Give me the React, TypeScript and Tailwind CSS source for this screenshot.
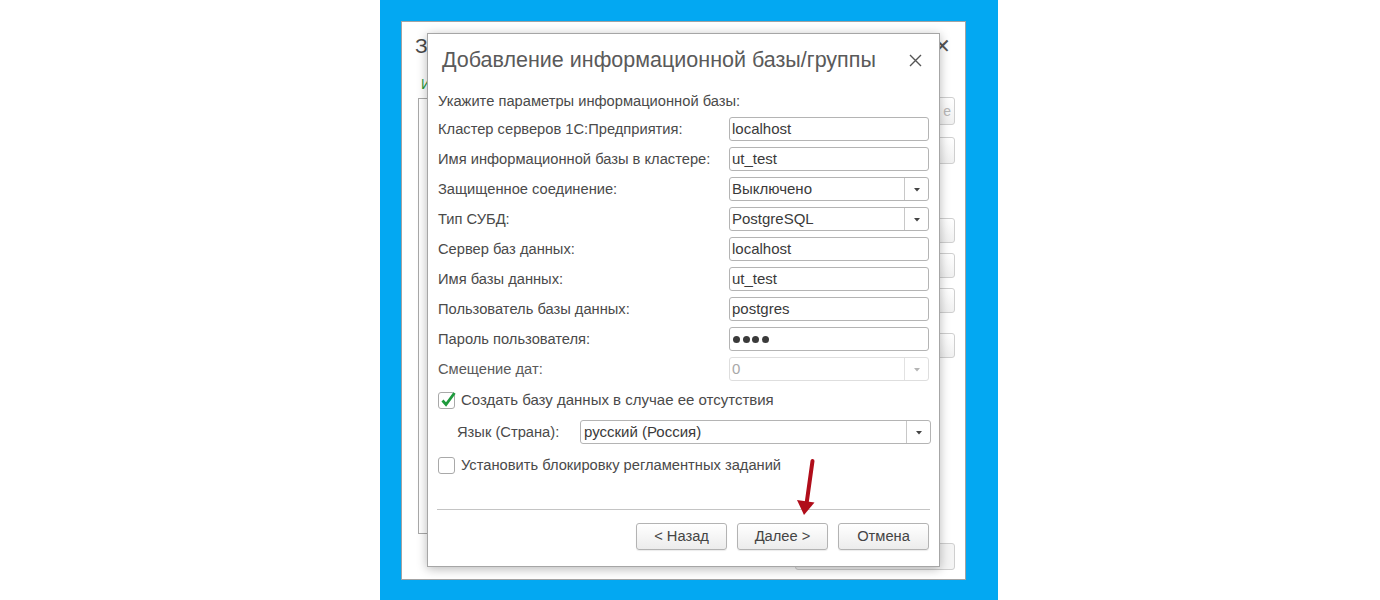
import React from 'react'

interface Field {
  label: string
  value: string
  kind?: 'text' | 'select' | 'password' | 'disabled'
}

const fields: Field[] = [
  { label: 'Кластер серверов 1С:Предприятия:', value: 'localhost' },
  { label: 'Имя информационной базы в кластере:', value: 'ut_test' },
  { label: 'Защищенное соединение:', value: 'Выключено', kind: 'select' },
  { label: 'Тип СУБД:', value: 'PostgreSQL', kind: 'select' },
  { label: 'Сервер баз данных:', value: 'localhost' },
  { label: 'Имя базы данных:', value: 'ut_test' },
  { label: 'Пользователь базы данных:', value: 'postgres' },
  { label: 'Пароль пользователя:', value: '••••', kind: 'password' },
  { label: 'Смещение дат:', value: '0', kind: 'disabled' },
]

const Arrow = ({ light }: { light?: boolean }) => (
  <svg width="8" height="5" viewBox="0 0 8 5">
    <path d="M1 1h6L4 4.5z" fill={light ? '#b5b5b5' : '#444'} />
  </svg>
)

const Input: React.FC<{ field: Field }> = ({ field }) => {
  const disabled = field.kind === 'disabled'
  const select = field.kind === 'select' || disabled
  return (
    <div
      className={`w-[200px] h-[24px] flex rounded-[3px] border bg-white ${
        disabled ? 'border-[#dedede]' : 'border-[#b4b4b4]'
      }`}
    >
      <div
        className={`flex-1 flex items-center pl-[2px] text-[15px] ${
          disabled ? 'text-[#a8a8a8]' : 'text-[#3a3a3a]'
        }`}
      >
        {field.kind === 'password' ? (
          <span className="flex gap-[2.5px] pl-[1px]" aria-label={field.value}>
            {[0, 1, 2, 3].map((i) => (
              <span key={i} className="w-[7px] h-[7px] rounded-full bg-[#3a3a3a]" />
            ))}
          </span>
        ) : (
          field.value
        )}
      </div>
      {select && (
        <div
          className={`w-[24px] flex items-center justify-center border-l ${
            disabled ? 'border-[#e2e2e2]' : 'border-[#c8c8c8]'
          }`}
        >
          <Arrow light={disabled} />
        </div>
      )}
    </div>
  )
}

const Checkbox = ({ checked }: { checked?: boolean }) => (
  <div className="w-[17px] h-[17px] rounded-[3px] border border-[#a9a9a9] bg-white relative">
    {checked && (
      <svg className="absolute left-[1px] top-[-3px]" width="17" height="18" viewBox="0 0 17 18">
        <path d="M2.5 10.5 L6 14.5 L14.5 3" stroke="#1e9a3c" strokeWidth="2.8" fill="none" />
      </svg>
    )}
  </div>
)

const Button = ({ children }: { children: React.ReactNode }) => (
  <div className="w-[91px] h-[27px] rounded-[3px] border border-[#b3b3b3] bg-gradient-to-b from-white to-[#ececec] flex items-center justify-center text-[14.7px] text-[#444] shadow-[0_1px_1px_rgba(0,0,0,0.08)]">
    {children}
  </div>
)

const BackButton = ({ className, label }: { className: string; label?: string }) => (
  <div
    className={`w-[120px] rounded-[3px] border border-[#cfcfcf] bg-gradient-to-b from-white to-[#f0f0f0] flex items-center justify-end pr-[3px] text-[14px] text-[#b8b8b8] ${className}`}
  >
    {label}
  </div>
)

export default function App() {
  return (
    <div
      className="w-[1380px] h-[600px] bg-white relative overflow-hidden"
      style={{ fontFamily: '"Liberation Sans", Arial, sans-serif' }}
    >
      <div className="ml-[380px] w-[618px] h-[600px] bg-[#03a8f2] pt-[21px] pl-[21px]">
        {/* back window, mostly covered by the dialog */}
        <div className="w-[565px] h-[559px] bg-white border border-[#a3a3a3] relative">
          <div className="h-[48px] flex items-center justify-between pl-[13px] pr-[14px]">
            <span className="text-[21px] text-[#4a4a4a]">З</span>
            <span className="text-[20px] text-[#555]">✕</span>
          </div>
          <div className="flex">
            <div className="ml-[16px] w-[400px]">
              <div className="h-[28px] flex items-center pl-[3px] text-[14px] text-[#2a9a3a]">И</div>
              <div className="h-[436px] border border-[#a9a9a9] bg-white" />
            </div>
            <div className="ml-auto mr-[10px] flex flex-col">
              <BackButton className="mt-[27px] h-[28px]" label="е" />
              <BackButton className="mt-[12px] h-[27px]" />
              <BackButton className="mt-[54px] h-[25px]" />
              <BackButton className="mt-[10px] h-[25px]" />
              <BackButton className="mt-[10px] h-[25px]" />
              <BackButton className="mt-[20px] h-[25px]" />
            </div>
          </div>
          <div className="absolute right-[10px] bottom-[9px] w-[160px] h-[27px] rounded-[3px] border border-[#cfcfcf] bg-[#f4f4f4]" />

          {/* dialog */}
          <div className="absolute left-[25px] top-[11px] w-[513px] h-[534px] bg-white border border-[#a6a6a6] shadow-[0_2px_10px_rgba(0,0,0,0.28)] flex flex-col px-[10px]">
            <div className="h-[52px] flex items-center justify-between pl-[4px] pr-[7px]">
              <span className="text-[21.5px] text-[#5a5a5a]">Добавление информационной базы/группы</span>
              <svg width="13" height="13" viewBox="0 0 13 13">
                <path d="M1 1L12 12M12 1L1 12" stroke="#555" strokeWidth="1.4" />
              </svg>
            </div>
            <div className="h-[31px] flex items-center text-[14.7px] text-[#4a4a4a]">
              Укажите параметры информационной базы:
            </div>
            <div className="flex flex-col gap-[6px]">
              {fields.map((f) => (
                <div key={f.label} className="h-[24px] flex items-center justify-between">
                  <span className={`text-[14.7px] ${f.kind === 'disabled' ? 'text-[#5a5a5a]' : 'text-[#4a4a4a]'}`}>
                    {f.label}
                  </span>
                  <Input field={f} />
                </div>
              ))}
            </div>
            <div className="mt-[9px] h-[20px] flex items-center gap-[6px]">
              <Checkbox checked />
              <span className="text-[15px] text-[#4a4a4a]">Создать базу данных в случае ее отсутствия</span>
            </div>
            <div className="mt-[10px] h-[24px] flex items-center mr-[-2px]">
              <span className="pl-[19px] w-[142px] text-[14.7px] text-[#4a4a4a]">Язык (Страна):</span>
              <div className="flex-1 h-[24px] flex rounded-[3px] border border-[#b4b4b4]">
                <div className="flex-1 flex items-center pl-[3px] text-[15px] text-[#3a3a3a]">русский (Россия)</div>
                <div className="w-[24px] flex items-center justify-center border-l border-[#c8c8c8]">
                  <Arrow />
                </div>
              </div>
            </div>
            <div className="mt-[11px] h-[20px] flex items-center gap-[6px]">
              <Checkbox />
              <span className="text-[14.7px] text-[#4a4a4a]">Установить блокировку регламентных заданий</span>
            </div>
            <div className="mt-[34px] h-px bg-[#c4c4c4] mx-[-1px]" />
            <div className="mt-[13px] flex justify-end gap-[10px]">
              <Button>&lt; Назад</Button>
              <Button>Далее &gt;</Button>
              <Button>Отмена</Button>
            </div>
          </div>
        </div>
      </div>

      {/* red arrow annotation */}
      <svg className="absolute left-[790px] top-[456px]" width="32" height="64" viewBox="0 0 32 64">
        <path d="M22.5 5 L16.5 48" stroke="#b00d1a" strokeWidth="4" strokeLinecap="round" />
        <path d="M7 44 L14 59 L24.5 46.5 Z" fill="#b00d1a" />
      </svg>
    </div>
  )
}
